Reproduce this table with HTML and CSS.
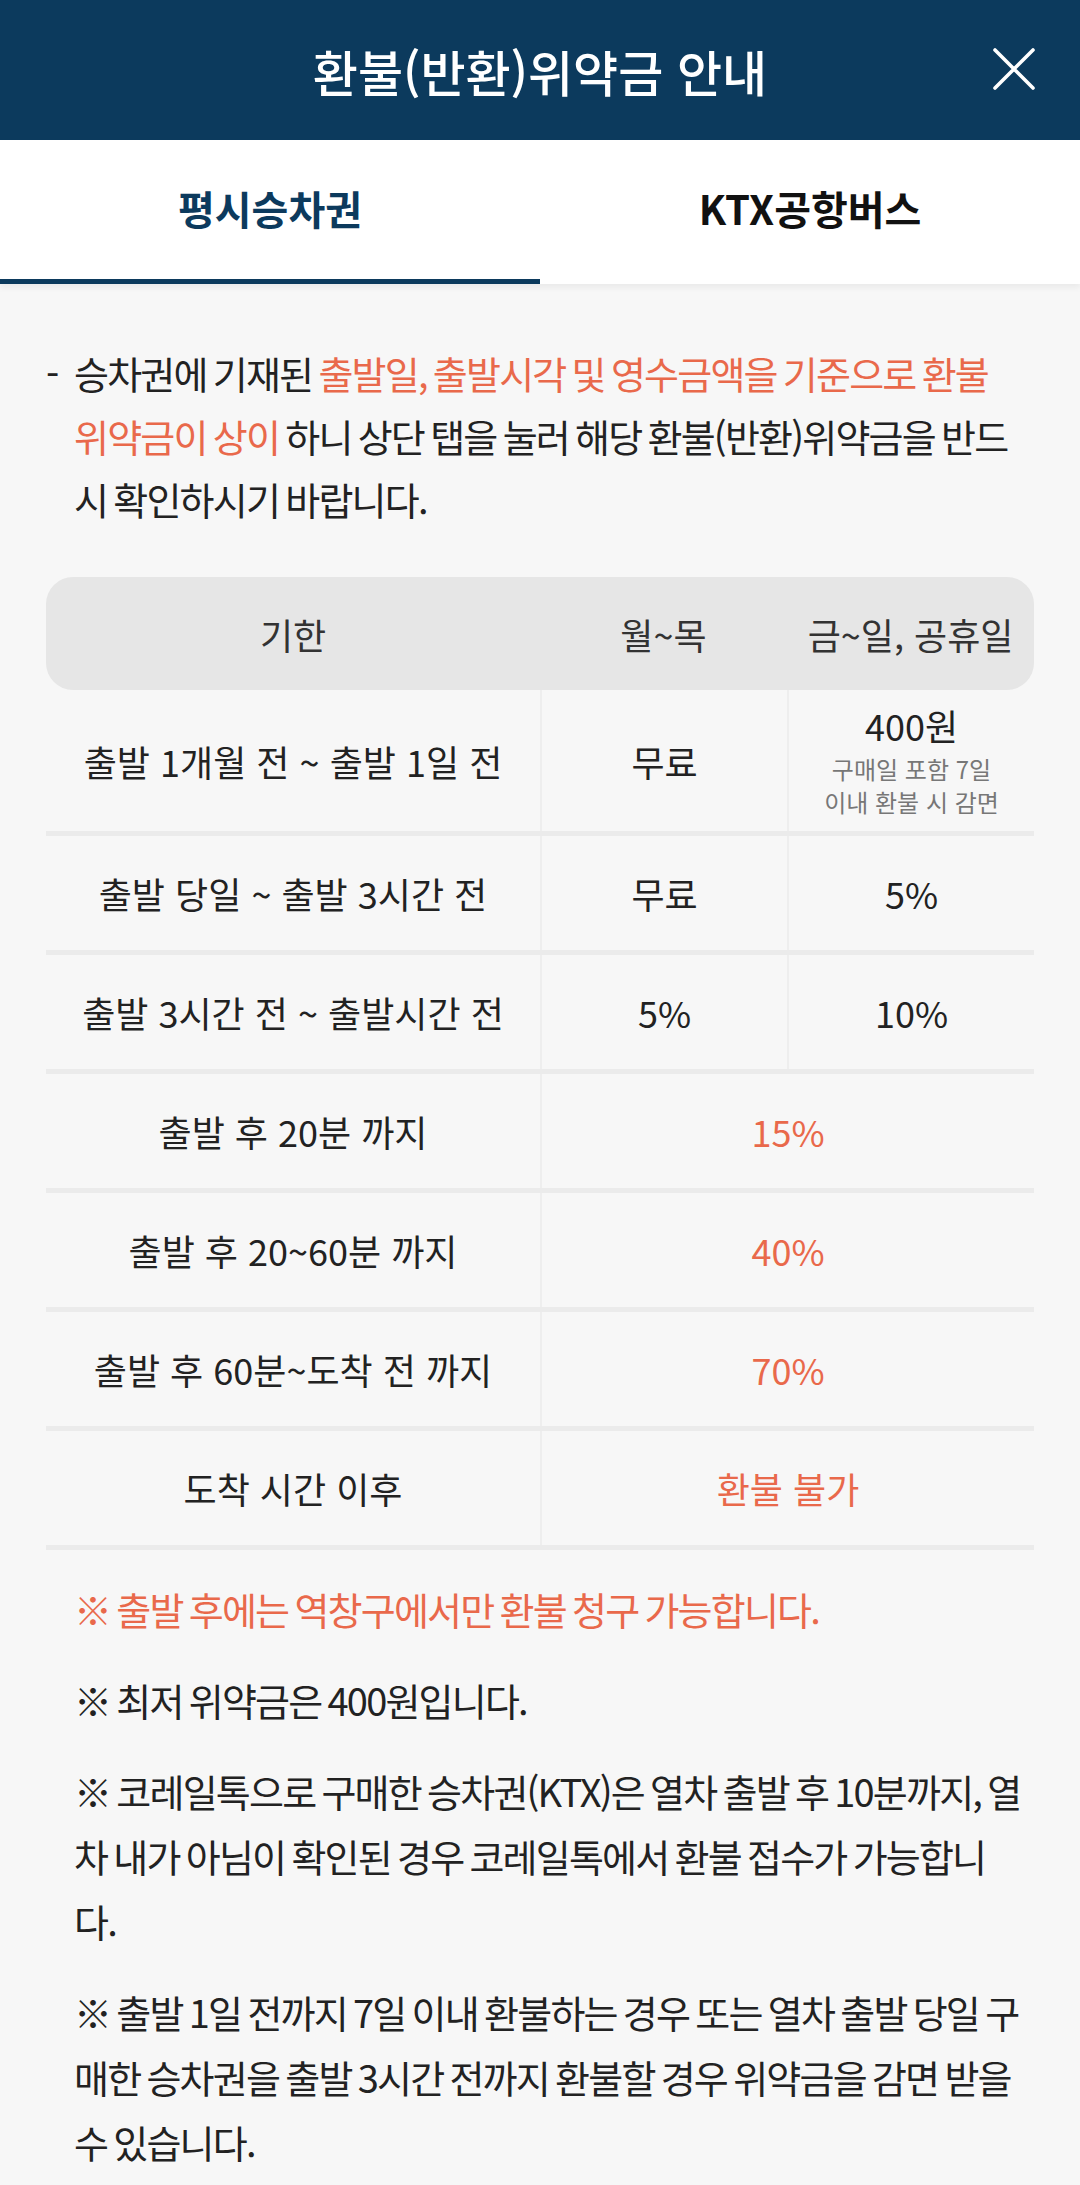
FILE: index.html
```html
<!DOCTYPE html>
<html lang="ko">
<head>
<meta charset="utf-8">
<title>환불(반환)위약금 안내</title>
<link rel="stylesheet" href="styles.css">
</head>
<body>
<header class="topbar">
  <h1 class="title">환불(반환)위약금 안내</h1>
  <button class="close" aria-label="닫기">
    <svg viewBox="0 0 42 42" width="42" height="42"><path d="M2 2 L40 40 M40 2 L2 40" stroke="#fff" stroke-width="3.6" stroke-linecap="round"/></svg>
  </button>
</header>
<nav class="tabs">
  <div class="tab active">평시승차권</div>
  <div class="tab">KTX공항버스</div>
</nav>
<main class="content">
  <div class="intro">
    <span class="dash">-</span>
    <p>승차권에 기재된 <em>출발일, 출발시각 및 영수금액을 기준으로 환불 위약금이 상이</em> 하니 상단 탭을 눌러 해당 환불(반환)위약금을 반드시 확인하시기 바랍니다.</p>
  </div>

  <div class="table">
    <div class="row head">
      <div class="cell">기한</div>
      <div class="cell">월~목</div>
      <div class="cell">금~일, 공휴일</div>
    </div>
    <div class="row tall">
      <div class="cell">출발 1개월 전 ~ 출발 1일 전</div>
      <div class="cell line">무료</div>
      <div class="cell line stack">
        <span>400원</span>
        <small>구매일 포함 7일<br>이내 환불 시 감면</small>
      </div>
    </div>
    <div class="row">
      <div class="cell">출발 당일 ~ 출발 3시간 전</div>
      <div class="cell line">무료</div>
      <div class="cell line">5%</div>
    </div>
    <div class="row">
      <div class="cell">출발 3시간 전 ~ 출발시간 전</div>
      <div class="cell line">5%</div>
      <div class="cell line">10%</div>
    </div>
    <div class="row">
      <div class="cell">출발 후 20분 까지</div>
      <div class="cell line wide accent">15%</div>
    </div>
    <div class="row">
      <div class="cell">출발 후 20~60분 까지</div>
      <div class="cell line wide accent">40%</div>
    </div>
    <div class="row">
      <div class="cell">출발 후 60분~도착 전 까지</div>
      <div class="cell line wide accent">70%</div>
    </div>
    <div class="row">
      <div class="cell">도착 시간 이후</div>
      <div class="cell line wide accent">환불 불가</div>
    </div>
  </div>

  <div class="notes">
    <p class="accent">※ 출발 후에는 역창구에서만 환불 청구 가능합니다.</p>
    <p>※ 최저 위약금은 400원입니다.</p>
    <p>※ 코레일톡으로 구매한 승차권(KTX)은 열차 출발 후 10분까지, 열차 내가 아님이 확인된 경우 코레일톡에서 환불 접수가 가능합니다.</p>
    <p>※ 출발 1일 전까지 7일 이내 환불하는 경우 또는 열차 출발 당일 구매한 승차권을 출발 3시간 전까지 환불할 경우 위약금을 감면 받을 수 있습니다.</p>
  </div>
</main>
</body>
</html>
```

FILE: styles.css
```css
* { box-sizing: border-box; }
html, body {
  margin: 0;
  padding: 0;
}
body {
  width: 1080px;
  min-height: 2185px;
  background: #f7f7f7;
  font-family: "Noto Sans CJK KR", "Noto Sans", sans-serif;
  color: #222;
}

.topbar {
  position: relative;
  height: 140px;
  background: #0c3a5d;
  display: flex;
  align-items: center;
  justify-content: center;
}
.title {
  margin: 0;
  color: #fff;
  font-size: 49px;
  font-weight: 500;
}
.close {
  position: absolute;
  right: 45px;
  top: 48px;
  width: 42px;
  height: 42px;
  padding: 0;
  border: 0;
  background: transparent;
  display: block;
}
.close svg { display: block; }

.tabs {
  display: grid;
  grid-template-columns: 1fr 1fr;
  height: 144px;
  background: #fff;
  box-shadow: 0 4px 6px rgba(0,0,0,0.05);
  position: relative;
}
.tab {
  display: flex;
  align-items: center;
  justify-content: center;
  font-size: 40px;
  font-weight: 700;
  color: #111;
  padding-bottom: 4px;
  border-bottom: 5px solid transparent;
}
.tab.active {
  color: #0c3a5d;
  border-bottom-color: #0c3a5d;
}

.content {
  padding: 57px 46px 0;
}
em, .accent {
  font-style: normal;
  color: #e9694b;
}

.intro {
  display: flex;
  font-size: 38px;
  letter-spacing: -1.8px;
  word-spacing: -2.7px;
  line-height: 63px;
  color: #222;
}
.intro .dash {
  flex: 0 0 28px;
}
.intro p {
  margin: 0;
  flex: 1;
  padding-right: 12px;
}

.table {
  margin-top: 47px;
}
.row {
  display: grid;
  grid-template-columns: 494px 1fr 1fr;
  height: 119px;
  border-bottom: 5px solid #ebebeb;
  font-size: 36px;
  color: #222;
}
.row.head {
  height: 113px;
  background: #e6e6e6;
  border-radius: 27px;
  border-bottom: 0;
  color: #333;
}
.row.tall {
  height: 146px;
}
.cell {
  display: flex;
  align-items: center;
  justify-content: center;
  text-align: center;
}
.cell.line {
  border-left: 2px solid #eeeeee;
}
.cell.wide {
  grid-column: span 2;
}
.cell.stack {
  flex-direction: column;
  justify-content: flex-start;
  padding-top: 12px;
}
.cell.stack span {
  line-height: 46px;
}
.cell.stack small {
  font-size: 24px;
  line-height: 33px;
  color: #777;
  margin-top: 4px;
}

.notes {
  padding: 26px 11px 0 28px;
}
.notes p {
  margin: 0 0 26px;
  font-size: 38px;
  letter-spacing: -1.8px;
  word-spacing: -2.7px;
  line-height: 65px;
  color: #222;
}
.notes p.accent {
  color: #e9694b;
}
```
